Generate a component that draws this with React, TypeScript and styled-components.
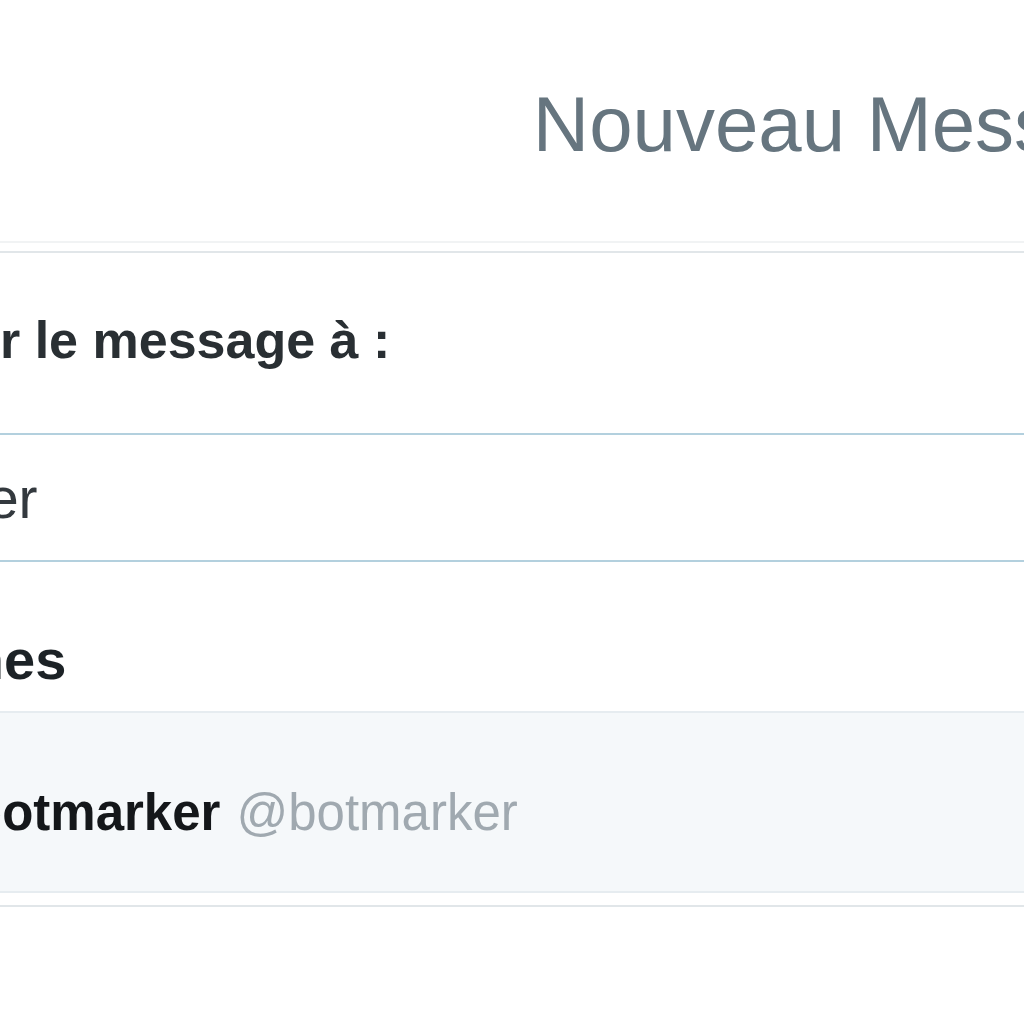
import React from "react";
import styled, { createGlobalStyle } from "styled-components";

const Global = createGlobalStyle`
  html, body {
    margin: 0;
    padding: 0;
    background: #ffffff;
    overflow: hidden;
  }
  body {
    font-family: "Liberation Sans", Arial, sans-serif;
  }
`;

const Viewport = styled.div`
  width: 1024px;
  height: 1024px;
  overflow: hidden;
  background: #ffffff;
`;

const Dialog = styled.div`
  width: 2236px;
  margin-left: -260px;
  display: flex;
  flex-direction: column;
  background: #ffffff;
`;

const Header = styled.header`
  padding: 85px 0 78px;
  border-bottom: 2px solid #f1f3f4;
  text-align: center;
`;

const Title = styled.h1`
  margin: 0;
  font-size: 78px;
  line-height: 78px;
  font-weight: 400;
  color: #66757f;
  white-space: nowrap;
`;

const Body = styled.div`
  margin-top: 8px;
  border-top: 2px solid #e1e6e9;
  display: flex;
  flex-direction: column;
`;

const Label = styled.label<{ $indent: number }>`
  display: block;
  padding: 61px 0 67px ${(p) => p.$indent}px;
  font-size: 52px;
  line-height: 52px;
  font-weight: 700;
  color: #292f33;
  white-space: nowrap;
`;

const TokenInput = styled.div<{ $indent: number }>`
  border-top: 2px solid #b3d0de;
  border-bottom: 2px solid #b3d0de;
  padding: 35px 0 33px ${(p) => p.$indent}px;
  font-size: 57px;
  line-height: 57px;
  color: #33393e;
  white-space: nowrap;
`;

const SectionTitle = styled.h2<{ $indent: number }>`
  margin: 0;
  padding: 70px 0 23px ${(p) => p.$indent}px;
  font-size: 56px;
  line-height: 56px;
  font-weight: 700;
  color: #1c2226;
  white-space: nowrap;
`;

const SuggestionList = styled.ul`
  list-style: none;
  margin: 0;
  padding: 0 0 12px;
  border-top: 2px solid #e6ecf0;
  border-bottom: 2px solid #e1e6e9;
`;

const SuggestionRow = styled.li<{ $indent: number }>`
  display: flex;
  align-items: flex-start;
  gap: 40px;
  padding: 30px 0 28px ${(p) => p.$indent}px;
  background: #f5f8fa;
  border-bottom: 2px solid #e6ecf0;
`;

const Avatar = styled.span`
  width: 120px;
  height: 120px;
  border-radius: 50%;
  background: #ccd6dd;
  flex: none;
`;

const Names = styled.span`
  padding-top: 44px;
  font-size: 51px;
  line-height: 51px;
  white-space: nowrap;
`;

const FullName = styled.b`
  font-weight: 700;
  color: #14171a;
`;

const ScreenName = styled.span`
  color: #a0a9b0;
  margin-left: 16px;
`;

export default function App() {
  return (
    <Viewport>
      <Global />
      <Dialog>
        <Header>
          <Title>Nouveau Message</Title>
        </Header>
        <Body>
          <Label $indent={75}>Envoyer le message à :</Label>
          <TokenInput $indent={41}>botmarker</TokenInput>
          <SectionTitle $indent={40}>Personnes</SectionTitle>
          <SuggestionList>
            <SuggestionRow $indent={71}>
              <Avatar />
              <Names>
                <FullName>botmarker</FullName>
                <ScreenName>@botmarker</ScreenName>
              </Names>
            </SuggestionRow>
          </SuggestionList>
        </Body>
      </Dialog>
    </Viewport>
  );
}
